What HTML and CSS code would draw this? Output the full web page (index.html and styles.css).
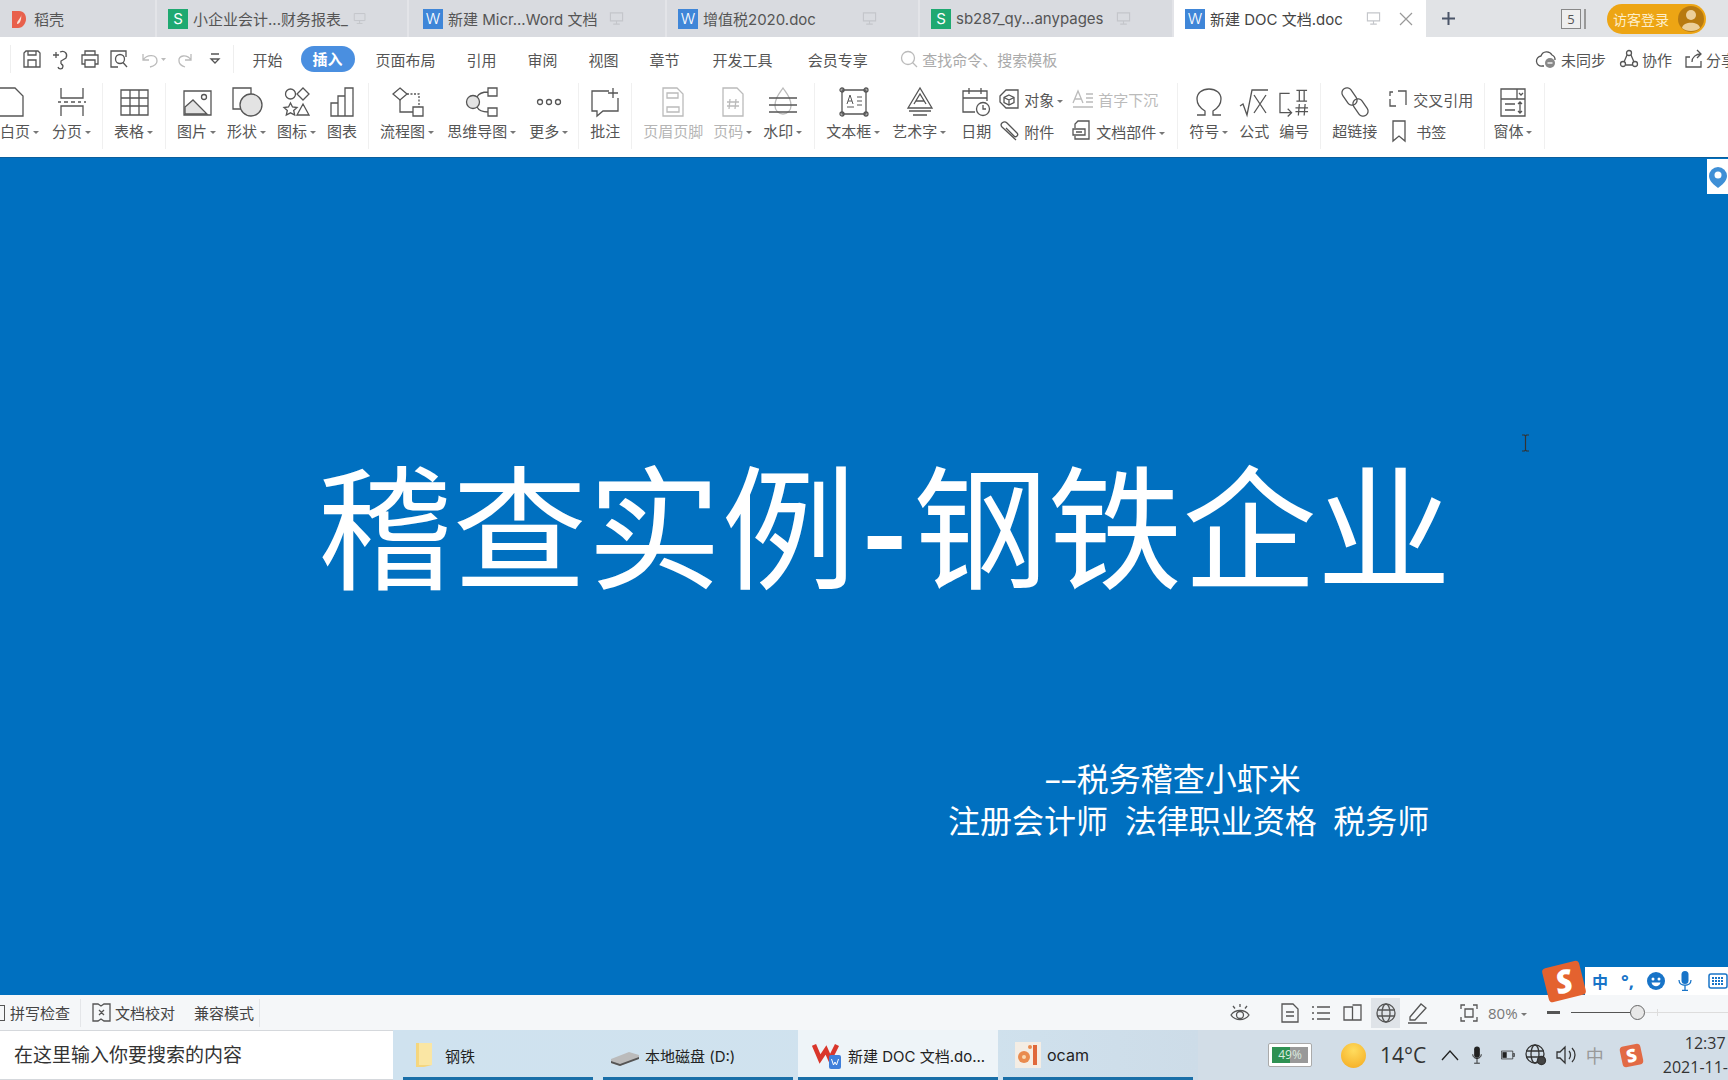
FILE: index.html
```html
<!DOCTYPE html>
<html lang="zh-CN">
<head>
    <meta charset="UTF-8">
    <title>新建 DOC 文档.doc</title>
    <link rel="stylesheet" href="styles.css">
</head>
<body>
    <svg class="defs" width="0" height="0">
        <symbol id="cast" viewBox="0 0 16 16"><path d="M1.5 2h13v8.5h-13zM8 10.5V14M4.5 14h7" fill="none" stroke="currentColor" stroke-width="1.2"/></symbol>
        <symbol id="caret" viewBox="0 0 8 8"><path d="M1 3h6L4 6z" fill="currentColor"/></symbol>
    </svg>

    <!-- tabs -->
    <div class="tabbar">
        <div class="tab tab-first">
            <svg class="tab-logo" width="16" height="20" viewBox="0 0 16 20"><path d="M1 2h7c5 0 7 4 7 8s-3 9-8 9H1z" fill="#e8604c"/><path d="M10 5c1 4-4 6-4 10 3 0 5-5 4-10z" fill="#fbe3d8"/></svg>
            <span>稻壳</span>
        </div>
        <div class="tab"><span class="app-s">S</span><span>小企业会计...财务报表_</span><svg class="cast"><use href="#cast"/></svg></div>
        <div class="tab tab-mic"><span class="app-w">W</span><span>新建 Micr...Word 文档</span><svg class="cast"><use href="#cast"/></svg></div>
        <div class="tab"><span class="app-w">W</span><span>增值税2020.doc</span><svg class="cast"><use href="#cast"/></svg></div>
        <div class="tab"><span class="app-s">S</span><span>sb287_qy...anypages</span><svg class="cast"><use href="#cast"/></svg></div>
        <div class="tab tab-active">
            <span class="app-w">W</span><span>新建 DOC 文档.doc</span>
            <svg class="cast"><use href="#cast"/></svg>
            <svg class="tab-close" width="14" height="14" viewBox="0 0 14 14"><path d="M1 1l12 12M13 1L1 13" stroke="#999" stroke-width="1.2"/></svg>
        </div>
        <div class="tab-tail">
            <svg class="tab-plus" width="15" height="15" viewBox="0 0 15 15"><path d="M7.5 1v13M1 7.5h13" stroke="#4a5568" stroke-width="2"/></svg>
            <div class="tab-count"><span>5</span></div>
            <div class="login">
                <span>访客登录</span>
                <svg width="26" height="26" viewBox="0 0 26 26"><circle cx="13" cy="13" r="13" fill="#b87a10"/><circle cx="13" cy="9" r="5" fill="#eccf9a"/><path d="M4 22c1-7 17-7 18 0-4 4-14 4-18 0z" fill="#eccf9a"/></svg>
            </div>
        </div>
    </div>

    <!-- menu row -->
    <div class="menubar">
        <div class="quick">
            <svg class="ic" width="20" height="20" viewBox="0 0 20 20"><path d="M2 4l2-2h12l2 2v14H2zM6 18v-7h8v7M6 2v4h8V2"/></svg>
            <svg class="ic" width="20" height="20" viewBox="0 0 20 20"><path d="M2 6h6M5 3v6M9 3c5-2 8 2 6 6l-5 3v3M10 15a2.500 2.500 0 1 1-3 3"/></svg>
            <svg class="ic" width="20" height="20" viewBox="0 0 20 20"><path d="M5 6V2h10v4M5 15H2V6h16v9h-3M5 11h10v7H5z"/></svg>
            <svg class="ic" width="20" height="20" viewBox="0 0 20 20"><path d="M17 8V2H2v16h7"/><circle cx="11" cy="10" r="4.500"/><path d="M14 13.500l4 4.500"/></svg>
            <svg class="ic ic-off undo" width="26" height="20" viewBox="0 0 26 20"><path d="M3 5v6h6M3 11c4-6 14-6 14 1 0 3-3 5-7 6"/><path d="M21 9h5l-2.500 3z" class="solid"/></svg>
            <svg class="ic ic-off redo" width="16" height="20" viewBox="0 0 16 20"><path d="M14 5v6H8M14 11C10 5 1 6 2 12c0 3 3 5 6 6"/></svg>
            <svg class="ic more" width="12" height="20" viewBox="0 0 12 20"><path d="M2 5h8M2 10h8l-4 4z"/></svg>
        </div>
        <nav class="menu">
            <a>开始</a><a class="menu-on">插入</a><a>页面布局</a><a>引用</a><a>审阅</a><a>视图</a><a>章节</a><a>开发工具</a><a>会员专享</a>
        </nav>
        <div class="search">
            <svg class="ic ic-off" width="18" height="18" viewBox="0 0 18 18"><circle cx="8" cy="8" r="6.500"/><path d="M12.500 12.500l4.500 4.500"/></svg>
            <span>查找命令、搜索模板</span>
        </div>
        <div class="menu-right">
            <span class="act">
                <svg class="ic" width="22" height="20" viewBox="0 0 22 20"><path d="M8 17H6a5 5 0 0 1-1-10 6 6 0 0 1 11-1 5 5 0 0 1 3 5"/><circle cx="14" cy="14" r="5" fill="#888" stroke="none"/><path d="M11.500 14h5" stroke="#fff"/></svg>
                未同步
            </span>
            <span class="act">
                <svg class="ic" width="20" height="20" viewBox="0 0 20 20"><circle cx="10" cy="4" r="2.500"/><circle cx="4" cy="15" r="2.500"/><circle cx="16" cy="15" r="2.500"/><path d="M8 6l-3 7M12 6l3 7M7 16h6"/></svg>
                协作
            </span>
            <span class="act">
                <svg class="ic" width="18" height="20" viewBox="0 0 18 20"><path d="M5 8H1v10h15v-6M7 13c0-5 4-8 9-8M12 1l4 4-4 4"/></svg>
                分享
            </span>
        </div>
    </div>

    <!-- ribbon -->
    <div class="ribbon">
        <div class="group g-first">
            <div class="tool tool-left">
                <svg class="ic" width="24" height="30" viewBox="0 0 24 30"><path d="M-2 1h17l8 8v20H-2"/></svg>
                <span class="lab">白页<svg class="car"><use href="#caret"/></svg></span>
            </div>
            <div class="tool">
                <svg class="ic" width="30" height="30" viewBox="0 0 30 30"><path d="M4 1v10h22V1M4 29V19h22v10M1 15h3M7 15h4M14 15h4M21 15h3M27 15h2"/></svg>
                <span class="lab">分页<svg class="car"><use href="#caret"/></svg></span>
            </div>
        </div>
        <div class="group">
            <div class="tool">
                <svg class="ic" width="30" height="30" viewBox="0 0 30 30"><path d="M2 3h27v25H2zM2 11h27M2 19h27M11 3v25M20 3v25"/></svg>
                <span class="lab">表格<svg class="car"><use href="#caret"/></svg></span>
            </div>
        </div>
        <div class="group g-wide">
            <div class="tool">
                <svg class="ic" width="30" height="30" viewBox="0 0 30 30"><path d="M2 4h27v24H2z"/><path d="M3 27v-7l8-7 14 14z" fill="#e3e3e3"/><circle cx="22" cy="10" r="2.500"/></svg>
                <span class="lab">图片<svg class="car"><use href="#caret"/></svg></span>
            </div>
            <div class="tool">
                <svg class="ic" width="32" height="30" viewBox="0 0 32 30"><path d="M10 22H2V1h18v8"/><circle cx="20" cy="18" r="11" fill="#e3e3e3"/></svg>
                <span class="lab">形状<svg class="car"><use href="#caret"/></svg></span>
            </div>
            <div class="tool">
                <svg class="ic" width="26" height="30" viewBox="0 0 26 30"><circle cx="6.500" cy="7" r="5"/><path d="M19 1l6 6-6 6-6-6zM6.500 16l2 4 4.500.5-3.300 3 1 4.500-4.200-2.200L2.300 28l1-4.500L0 20.500l4.500-.5zM19 17l6 11H13z"/></svg>
                <span class="lab">图标<svg class="car"><use href="#caret"/></svg></span>
            </div>
            <div class="tool">
                <svg class="ic" width="24" height="30" viewBox="0 0 24 30"><path d="M1 16h7v13H1zM8 9h7v20H8zM15 1h8v28h-8z"/></svg>
                <span class="lab">图表</span>
            </div>
        </div>
        <div class="group g-mid">
            <div class="tool">
                <svg class="ic" width="32" height="30" viewBox="0 0 32 30"><path d="M8 1l7 6-7 6-7-6z"/><path d="M15 7h12v13" stroke-dasharray="2 1.500"/><path d="M8 13v12h13M21 20h10v9H21z"/></svg>
                <span class="lab">流程图<svg class="car"><use href="#caret"/></svg></span>
            </div>
            <div class="tool">
                <svg class="ic" width="32" height="30" viewBox="0 0 32 30"><circle cx="7" cy="15" r="6.500" fill="#e3e3e3"/><path d="M22 1h9v8h-9zM22 21h9v8h-9zM11 10c2-4 5-5 11-5M11 20c2 4 5 5 11 5"/></svg>
                <span class="lab">思维导图<svg class="car"><use href="#caret"/></svg></span>
            </div>
            <div class="tool">
                <svg class="ic" width="26" height="30" viewBox="0 0 26 30"><circle cx="4" cy="15" r="2.500"/><circle cx="13" cy="15" r="2.500"/><circle cx="22" cy="15" r="2.500"/></svg>
                <span class="lab">更多<svg class="car"><use href="#caret"/></svg></span>
            </div>
        </div>
        <div class="group">
            <div class="tool">
                <svg class="ic" width="30" height="30" viewBox="0 0 30 30"><path d="M19 4H2v20h5v5l6-5h15V11M23 1v10M18 6h10"/></svg>
                <span class="lab">批注</span>
            </div>
        </div>
        <div class="group g-tight">
            <div class="tool tool-off">
                <svg class="ic" width="24" height="30" viewBox="0 0 24 30"><path d="M2 1h14l6 6v22H2zM6 6h11v5H6zM6 20h12v5H6z"/></svg>
                <span class="lab">页眉页脚</span>
            </div>
            <div class="tool tool-off">
                <svg class="ic" width="24" height="30" viewBox="0 0 24 30"><path d="M2 1h14l6 6v22H2zM9 12l-1 10M15 12l-1 10M6 15h12M6 19h12"/></svg>
                <span class="lab">页码<svg class="car"><use href="#caret"/></svg></span>
            </div>
            <div class="tool">
                <svg class="ic" width="30" height="30" viewBox="0 0 30 30"><path d="M15 1C11 7 7 11 7 19a8 8 0 0 0 16 0c0-8-4-12-8-18z" stroke="#bbb"/><path d="M1 11h28M1 18h28M1 25h28"/></svg>
                <span class="lab">水印<svg class="car"><use href="#caret"/></svg></span>
            </div>
        </div>
        <div class="group">
            <div class="tool">
                <svg class="ic" width="30" height="30" viewBox="0 0 30 30"><path d="M3 3h24v24H3z"/><path d="M8 17l3-9 3 9M9 14h4M8 20h7M18 10h5M18 14h5M18 18h5" stroke-width="1"/><circle cx="3" cy="3" r="2"/><circle cx="27" cy="3" r="2"/><circle cx="3" cy="27" r="2"/><circle cx="27" cy="27" r="2"/></svg>
                <span class="lab">文本框<svg class="car"><use href="#caret"/></svg></span>
            </div>
            <div class="tool">
                <svg class="ic" width="28" height="30" viewBox="0 0 28 30"><path d="M2 21L14 1l12 20zM8 17l6-10 6 10M10 14h8M3 24h22M7 28h14"/></svg>
                <span class="lab">艺术字<svg class="car"><use href="#caret"/></svg></span>
            </div>
            <div class="tool tool-date">
                <svg class="ic" width="28" height="30" viewBox="0 0 28 30"><path d="M13 25H1V4h24v10M1 11h24M7 1v6M19 1v6"/><circle cx="21" cy="22" r="6.500"/><path d="M21 18v4h3"/></svg>
                <span class="lab">日期</span>
            </div>
            <div class="col">
                <div class="mini">
                    <svg class="ic" width="20" height="22" viewBox="0 0 20 22"><path d="M1 8l6-6h12v18H7l-6-6z"/><path d="M10 7l5 2.500v5L10 17l-5-2.500v-5zM5 9.500l5 2.500 5-2.500M10 12v5"/></svg>
                    <span>对象<svg class="car"><use href="#caret"/></svg></span>
                </div>
                <div class="mini">
                    <svg class="ic" width="20" height="22" viewBox="0 0 20 22"><path d="M17 20L3 7c-3-3 2-7 5-4l10 10c2 2-1 5-3 3L7 8"/></svg>
                    <span>附件</span>
                </div>
            </div>
            <div class="col col-tight">
                <div class="mini mini-off">
                    <svg class="ic" width="22" height="22" viewBox="0 0 22 22"><path d="M1 15L6 3l5 12M3 11h6M1 19h20M14 6h7M14 10h7M14 14h7"/></svg>
                    <span>首字下沉</span>
                </div>
                <div class="mini">
                    <svg class="ic" width="20" height="22" viewBox="0 0 20 22"><path d="M3 8V4l3-3h11v18H3v-3M1 9h12v6H1zM4 12h6"/></svg>
                    <span>文档部件<svg class="car"><use href="#caret"/></svg></span>
                </div>
            </div>
        </div>
        <div class="group g-sym">
            <div class="tool">
                <svg class="ic" width="28" height="30" viewBox="0 0 28 30"><path d="M2 28h8v-4C5 21 2 17 2 12 2 6 7 2 14 2s12 4 12 10c0 5-3 9-8 12v4h8"/></svg>
                <span class="lab">符号<svg class="car"><use href="#caret"/></svg></span>
            </div>
            <div class="tool">
                <svg class="ic" width="30" height="30" viewBox="0 0 30 30"><path d="M1 19l3-2 4 11 5-25h16M15 8l12 18M27 8L15 26"/></svg>
                <span class="lab">公式</span>
            </div>
            <div class="tool">
                <svg class="ic" width="30" height="30" viewBox="0 0 31 30"><path d="M11 6H1v20h12M9 22l4 4-4 4M18 3h11M18 14h11M21 3v11M26 3v11M21 17l-1 12M27 17l-1 12M17 21h13M17 25h13"/></svg>
                <span class="lab">编号</span>
            </div>
        </div>
        <div class="group">
            <div class="tool">
                <svg class="ic" width="30" height="30" viewBox="0 0 30 30"><rect x="4.500" y="0" width="10" height="19" rx="5" transform="rotate(-35 9.500 9.500)"/><rect x="15.500" y="11" width="10" height="19" rx="5" transform="rotate(-35 20.500 20.500)"/></svg>
                <span class="lab">超链接</span>
            </div>
            <div class="col">
                <div class="mini">
                    <svg class="ic" width="20" height="22" viewBox="0 0 20 22"><path d="M2 8V4h3M10 3h8v14M8 18H2v-7"/></svg>
                    <span>交叉引用</span>
                </div>
                <div class="mini">
                    <svg class="ic bookmark" width="16" height="22" viewBox="0 0 16 22"><path d="M2 1h12v20l-6-5-6 5z"/></svg>
                    <span>书签</span>
                </div>
            </div>
        </div>
        <div class="group g-last">
            <div class="tool">
                <svg class="ic" width="28" height="30" viewBox="0 0 28 30"><path d="M2 2h24v27H2zM2 12h24M18 2v10M20 6l2 2 2-2M6 17h10M6 23h10M21 15v11M19 17l2-2 2 2M19 24l2 2 2-2"/></svg>
                <span class="lab">窗体<svg class="car"><use href="#caret"/></svg></span>
            </div>
        </div>
    </div>

    <!-- slide -->
    <main class="slide">
        <h1 class="slide-title">稽查实例<span class="slide-dash">-</span>钢铁企业</h1>
        <div class="slide-sub">
            <p class="sub-first">––税务稽查小虾米</p>
            <p>注册会计师&nbsp;&nbsp;法律职业资格&nbsp;&nbsp;税务师</p>
        </div>

        <div class="side-tab">
            <svg width="21" height="24" viewBox="0 0 21 24"><path d="M11 2a9 9 0 0 1 9 9c0 5-5 9-9 12-4-3-9-7-9-12a9 9 0 0 1 9-9z" fill="#3f8fd6"/><circle cx="11" cy="10" r="3.500" fill="#fff"/></svg>
        </div>
        <svg class="ibeam" width="9" height="18" viewBox="0 0 9 18"><path d="M1 1h2.500L4.500 2l1-1H8M4.500 2v14M1 17h2.500l1-1 1 1H8" fill="none" stroke="#333" stroke-width="1.200"/></svg>

        <div class="ime">
            <div class="ime-logo">S</div>
            <span class="ime-zh">中</span>
            <span class="ime-punc">°,</span>
            <svg width="18" height="18" viewBox="0 0 18 18"><circle cx="9" cy="9" r="9" fill="#1874c8"/><circle cx="6" cy="7" r="1.500" fill="#fff"/><circle cx="12" cy="7" r="1.500" fill="#fff"/><path d="M4.500 10.500h9c-1 5-8 5-9 0z" fill="#fff"/></svg>
            <svg width="14" height="20" viewBox="0 0 14 20"><rect x="3.500" y="0" width="7" height="13" rx="3.500" fill="#1874c8"/><path d="M1 9c0 7 12 7 12 0M7 15v4M4 19.500h6" fill="none" stroke="#1874c8" stroke-width="1.300"/></svg>
            <svg class="ime-kb" width="20" height="16" viewBox="0 0 20 16"><rect x="1" y="1" width="18" height="14" rx="2" fill="none" stroke="#1874c8" stroke-width="1.500"/><path d="M4 5h12M4 8h12M4 11h12" stroke="#1874c8" stroke-width="1.800" stroke-dasharray="2 1"/></svg>
        </div>
    </main>

    <!-- status bar -->
    <div class="statusbar">
        <div class="st-left">
            <span class="st-item st-spell"><i class="st-box"></i>拼写检查</span>
            <span class="st-item st-check">
                <svg class="ic" width="19" height="20" viewBox="0 0 19 20"><path d="M1 1h5l3 2 3-2h6v17h-6l-3-2-3 2H1zM7 7l5 5M12 7l-5 5"/></svg>
                文档校对
            </span>
            <span class="st-item st-mode">兼容模式</span>
        </div>
        <div class="st-right">
            <svg class="ic st-eye" width="20" height="20" viewBox="0 0 20 20"><path d="M1 12c4-6 14-6 18 0-4 6-14 6-18 0zM10 1v3M3 3l2 2.500M17 3l-2 2.500"/><circle cx="10" cy="12" r="3.500"/></svg>
            <svg class="ic" width="18" height="20" viewBox="0 0 18 20"><path d="M1 1h11l5 5v13H1zM5 9h8M5 13h8"/></svg>
            <svg class="ic" width="18" height="20" viewBox="0 0 18 20"><path d="M5 4h13M5 10h13M5 16h13M0 4h2M0 10h2M0 16h2"/></svg>
            <svg class="ic" width="19" height="20" viewBox="0 0 19 20"><path d="M9.500 4H1v13h8.500V4zM9.500 17H18V2H9.500"/></svg>
            <span class="st-web">
                <svg class="ic" width="20" height="20" viewBox="0 0 20 20"><circle cx="10" cy="10" r="9"/><ellipse cx="10" cy="10" rx="4" ry="9"/><path d="M1 7h18M1 13h18"/></svg>
            </span>
            <svg class="ic st-pen" width="21" height="22" viewBox="0 0 21 22"><path d="M3 15L14 2l5 4L8 18H3zM1 21h19"/></svg>
            <svg class="ic st-fit" width="18" height="20" viewBox="0 0 18 20"><path d="M1 6V2h4M13 2h4v4M1 14v4h4M13 18h4v-4M5 6h8v8H5z"/></svg>
            <span class="st-zoom">80%<svg class="car"><use href="#caret"/></svg></span>
            <i class="st-minus"></i>
            <div class="st-slider"><i class="knob"></i><i class="tick"></i></div>
        </div>
    </div>

    <!-- taskbar -->
    <div class="taskbar">
        <div class="task-search">在这里输入你要搜索的内容</div>
        <div class="tasks">
            <div class="task">
                <svg class="task-folder" width="16" height="26" viewBox="0 0 16 26"><path d="M0 1h16v22l-8 2H0z" fill="#f5d67e"/><path d="M3 1h13v22H3z" fill="#fae6a4"/></svg>
                <span>钢铁</span>
            </div>
            <div class="task">
                <svg class="task-disk" width="28" height="16" viewBox="0 0 28 16"><path d="M0 8l18-7 10 3v3L9 15 0 12z" fill="#bbb"/><path d="M0 10l9 3 19-7v2L9 15l-9-3z" fill="#555"/></svg>
                <span>本地磁盘 (D:)</span>
            </div>
            <div class="task task-active">
                <svg class="task-wps" width="30" height="28" viewBox="0 0 30 28"><path d="M2 4l6 14 6-9 4 9 7-14" fill="none" stroke="#d9362b" stroke-width="4.500"/><rect x="17" y="14" width="12" height="14" rx="2" fill="#3f7fdb"/><path d="M19.500 18l2 6 1.500-3 1.500 3 2-6" fill="none" stroke="#fff"/></svg>
                <span>新建 DOC 文档.do...</span>
            </div>
            <div class="task">
                <svg class="task-cam" width="26" height="26" viewBox="0 0 26 26"><rect width="26" height="26" fill="#f4ede4"/><circle cx="9" cy="15" r="6" fill="#e98b4e"/><circle cx="9" cy="15" r="2" fill="#f9d9b0"/><circle cx="15" cy="5" r="2" fill="#e98b4e"/><rect x="18" y="3" width="4" height="20" fill="#e0683a"/></svg>
                <span class="task-ocam">ocam</span>
            </div>
        </div>
        <div class="tray">
            <div class="bat"><div class="bat-in"><span class="bat-fill"></span><span class="bat-txt">49%</span></div></div>
            <i class="sun"></i>
            <span class="temp">14°C</span>
            <svg class="ic tray-up" width="18" height="12" viewBox="0 0 18 12"><path d="M1 11l8-9 8 9"/></svg>
            <svg width="14" height="24" viewBox="0 0 14 24"><rect x="3" y="0" width="8" height="16" rx="4" fill="#222"/><path d="M1 11c0 8 12 8 12 0M7 17v6M3 23.500h8" fill="none" stroke="#222" stroke-width="1.300"/></svg>
            <svg class="tray-batt" width="19" height="12" viewBox="0 0 19 12"><path d="M.5.500h16v11H.5zM17 4h2v4h-2z" fill="none" stroke="#222"/><rect x="2" y="2" width="6" height="8" fill="#222"/></svg>
            <svg class="ic ic-dark" width="22" height="22" viewBox="0 0 22 22"><circle cx="10" cy="10" r="9"/><ellipse cx="10" cy="10" rx="4" ry="9"/><path d="M1 7h18M1 13h18"/><circle cx="16.500" cy="16.500" r="4" fill="#444"/></svg>
            <svg class="ic ic-dark" width="21" height="20" viewBox="0 0 21 20"><path d="M1 7h3l5-5v16l-5-5H1zM13 6c2 2 2 6 0 8M16 3c4 4 4 10 0 14"/></svg>
            <span class="tray-zh">中</span>
            <div class="tray-s">S</div>
            <div class="clock"><span class="clock-time">12:37</span><span>2021-11-</span></div>
        </div>
    </div>
</body>
</html>
```

FILE: styles.css
```css
* {
    box-sizing: border-box;
}

html, body {
    margin: 0;
    width: 1728px;
    height: 1080px;
    overflow: hidden;
}

body {
    display: flex;
    flex-direction: column;
    font-family: "Open Sans", "Noto Sans CJK SC", sans-serif;
    font-size: 15px;
    color: #555;
    background: #fff;
}

.defs {
    position: absolute;
}

.ic {
    flex-shrink: 0;
    fill: none;
    stroke: #555;
    stroke-width: 1.3;
    overflow: visible;
}

.ic-off {
    stroke: #bbb;
}

.ic-dark {
    stroke: #333;
}

.solid {
    fill: #bbb;
    stroke: none;
}

.car {
    width: 8px;
    height: 8px;
    margin-left: 2px;
    color: #777;
    vertical-align: 1px;
}

/* tabs */
.tabbar {
    height: 37px;
    flex-shrink: 0;
    display: grid;
    grid-template-columns: 157px 252px 258px 253px 254px 252px 1fr;
    background: #e1e3e6;
}

.tab {
    display: flex;
    align-items: center;
    gap: 5px;
    padding: 0 41px 0 11px;
    background: #d9dbe0;
    border-right: 2px solid #e3e4e8;
    font-family: "Inter", "Noto Sans CJK SC", sans-serif;
    white-space: nowrap;
}

.tab-first {
    gap: 7px;
}

.tab-mic {
    padding-left: 14px;
}

.tab-active {
    background: #fff;
    border-right: 0;
    padding-right: 13px;
    color: #444;
}

.tab-logo {
    flex-shrink: 0;
}

.app-s, .app-w {
    width: 20px;
    height: 20px;
    flex-shrink: 0;
    display: flex;
    align-items: center;
    justify-content: center;
    color: #fff;
    font-size: 15px;
    line-height: 1;
}

.app-s {
    background: #1fa971;
}

.app-w {
    background: #3f86d8;
    font-weight: 300;
}

.cast {
    width: 15px;
    height: 15px;
    margin-left: auto;
    color: #c4c6ca;
}

.tab-close {
    margin-left: 13px;
}

.tab-tail {
    display: flex;
    align-items: center;
    padding-left: 15px;
}

.tab-plus {
    margin-right: 105px;
}

.tab-count {
    width: 25px;
    height: 20px;
    border-right: 2px solid #999;
    padding-right: 3px;
    margin-right: 21px;
}

.tab-count span {
    display: block;
    width: 20px;
    height: 20px;
    background: #eee;
    border: 1px solid #888;
    font-size: 13px;
    line-height: 18px;
    text-align: center;
}

.login {
    width: 99px;
    height: 30px;
    display: flex;
    align-items: center;
    justify-content: space-between;
    padding: 0 2px 0 6px;
    border-radius: 15px;
    background: #eda514;
    color: #fdeecb;
    font-size: 14px;
}

/* menu row */
.menubar {
    height: 46px;
    flex-shrink: 0;
    display: flex;
    align-items: center;
    padding-bottom: 2px;
    white-space: nowrap;
}

.quick {
    width: 224px;
    height: 28px;
    flex-shrink: 0;
    margin-left: 10px;
    display: flex;
    align-items: center;
    gap: 9px;
    padding-left: 11px;
    border-left: 1px solid #eee;
    border-right: 1px solid #eee;
}

.undo {
    margin-left: 2px;
}

.redo {
    margin-left: 2px;
}

.more {
    margin-left: 7px;
}

.menu {
    display: flex;
    align-items: center;
    padding-left: 3px;
}

.menu a {
    padding: 0 15.5px;
}

.menu a.menu-on {
    height: 26px;
    margin: 0 5.500px 0 2.500px;
    padding: 0 12px;
    border-radius: 13px;
    background: #4a8fe0;
    color: #fff;
    font-weight: 700;
    line-height: 26px;
}

.menu a:nth-child(8) {
    margin-left: 2px;
}

.menu a:nth-child(9) {
    margin-left: 4px;
}

.search {
    display: flex;
    align-items: center;
    gap: 4px;
    margin-left: 17px;
    color: #aaa;
}

.menu-right {
    margin-left: auto;
    display: flex;
    gap: 13px;
    margin-right: -8px;
}

.act {
    display: flex;
    align-items: center;
    gap: 3px;
    font-size: 15px;
}

/* ribbon */
.ribbon {
    height: 74px;
    flex-shrink: 0;
    display: flex;
    align-items: flex-start;
    white-space: nowrap;
    font-size: 15px;
}

.group {
    height: 66px;
    display: flex;
    gap: 11px;
    padding: 0 11px;
    border-right: 1px solid #f0f0f0;
}

.g-first {
    gap: 12px;
    margin-left: -3px;
    padding: 0 10px 0 0;
}

.g-wide {
    gap: 10px;
}

.g-mid {
    gap: 12px;
    padding-right: 9px;
}

.g-tight {
    gap: 10px;
}

.g-sym {
    gap: 10px;
}

.g-last {
    padding-left: 8px;
}

.tool {
    display: flex;
    flex-direction: column;
    align-items: center;
    gap: 2px;
    padding-top: 4px;
}

.tool-left {
    align-items: flex-start;
}

.tool-left .ic {
    margin-left: 3px;
}

.tool-left .lab {
    margin-left: 3px;
}

.tool-date {
    margin: 0 -3px 0 3px;
}

.lab {
    line-height: 24px;
}

.tool-off {
    color: #b5b5b5;
}

.tool-off .ic {
    stroke: #bbb;
}

.col {
    display: flex;
    flex-direction: column;
    gap: 8px;
    padding-top: 4px;
}

.col-tight {
    margin-left: -3px;
}

.col-tight .mini {
    gap: 4px;
}

.mini {
    height: 24px;
    display: flex;
    align-items: center;
    gap: 5px;
}

.mini-off {
    color: #bbb;
}

.mini-off .ic {
    stroke: #bbb;
}

.bookmark {
    margin: 0 4px 0 3px;
}

/* slide */
.slide {
    position: relative;
    flex: 1;
    display: flex;
    flex-direction: column;
    padding-top: 294px;
    background: #0070c0;
    border-top: 1px solid #0a5f9e;
    color: #fff;
}

.slide-title {
    margin: 0 0 0 318px;
    font-size: 134.500px;
    font-weight: 400;
    line-height: 150px;
    white-space: nowrap;
}

.slide-dash {
    margin: 0 7px;
    font-weight: 600;
}

.slide-sub {
    align-self: flex-start;
    margin: 156px 0 0 948px;
    font-size: 32px;
    line-height: 42px;
    text-align: center;
    white-space: nowrap;
}

.slide-sub p {
    margin: 0;
}

.sub-first {
    padding-right: 32px;
}

.side-tab {
    position: absolute;
    top: 1px;
    right: 0;
    width: 21px;
    height: 35px;
    display: flex;
    align-items: center;
    background: #fff;
}

.ibeam {
    position: absolute;
    left: 1521px;
    top: 276px;
}

.ime {
    position: absolute;
    right: 0;
    bottom: 0;
    width: 143px;
    height: 28px;
    display: flex;
    align-items: center;
    gap: 13px;
    padding-left: 7px;
    background: #fff;
    color: #1874c8;
}

.ime-logo {
    position: absolute;
    left: -40px;
    top: -3px;
    width: 38px;
    height: 35px;
    background: #e4622f;
    border-radius: 4px;
    transform: rotate(-14deg);
    color: #fff;
    font-size: 32px;
    font-weight: 800;
    font-style: italic;
    line-height: 33px;
    text-align: center;
}

.ime-zh {
    font-size: 16px;
    font-weight: 700;
}

.ime-punc {
    font-size: 18px;
    font-weight: 700;
    line-height: 1;
}

.ime-kb {
    flex-shrink: 0;
    margin-left: 3px;
}

/* status bar */
.statusbar {
    height: 35px;
    flex-shrink: 0;
    display: flex;
    align-items: center;
    justify-content: space-between;
    background: #f5f7f9;
    white-space: nowrap;
    color: #444;
}

.st-left {
    display: flex;
    align-items: center;
    height: 100%;
}

.st-item {
    height: 28px;
    display: flex;
    align-items: center;
}

.st-box {
    width: 5px;
    height: 16px;
    margin-right: 5px;
    border: 1px solid #555;
    border-left: 0;
}

.st-spell {
    padding-right: 10px;
    border-right: 1px solid #e4e6e9;
}

.st-check {
    gap: 4px;
    padding-left: 11px;
}

.st-mode {
    margin-left: 19px;
    padding-right: 5px;
    border-right: 1px solid #e4e6e9;
}

.st-right {
    display: flex;
    align-items: center;
    gap: 13px;
    width: 498px;
    height: 100%;
}

.st-eye {
    margin-right: 18px;
}

.st-web {
    width: 29px;
    height: 30px;
    margin: 0 -6px 0 -4px;
    display: flex;
    align-items: center;
    justify-content: center;
    background: #dfe3e8;
}

.st-pen {
    margin-left: 0;
}

.st-fit {
    margin-left: 19px;
}

.st-zoom {
    margin-left: -3px;
    color: #777;
}

.st-minus {
    width: 13px;
    height: 2.500px;
    margin-left: 6px;
    background: #555;
}

.st-slider {
    position: relative;
    flex: 1;
    height: 1px;
    background: #ddd;
    margin-left: -2px;
}

.st-slider::before {
    content: "";
    position: absolute;
    left: 0;
    top: 0;
    width: 60px;
    height: 1px;
    background: #555;
}

.knob {
    position: absolute;
    left: 59px;
    top: -7px;
    width: 15px;
    height: 15px;
    border-radius: 50%;
    background: #e8e8e8;
    border: 1px solid #666;
}

.tick {
    position: absolute;
    left: 86px;
    top: -3px;
    width: 1px;
    height: 7px;
    background: #ddd;
}

/* taskbar */
.taskbar {
    height: 50px;
    flex-shrink: 0;
    display: flex;
    background: #d2dde7;
    white-space: nowrap;
    color: #222;
}

.task-search {
    width: 393px;
    padding-left: 14px;
    background: #fff;
    border-top: 1px solid #d5d8dc;
    border-bottom: 1px solid #d5d8dc;
    font-size: 19px;
    line-height: 48px;
    color: #333;
}

.tasks {
    display: flex;
    padding-left: 5px;
    background: linear-gradient(90deg, #cfe2ef, #d0e2ee 70%, #cddce8);
}

.task {
    width: 200px;
    display: flex;
    align-items: center;
    gap: 6px;
    padding: 0 10px;
    position: relative;
    font-family: "Inter", "Noto Sans CJK SC", sans-serif;
}

.task::after {
    content: "";
    position: absolute;
    left: 5px;
    right: 5px;
    bottom: 0;
    height: 3px;
    background: #1a6fa8;
}

.task-active {
    background: #eef4f8;
}

.task-active::after {
    left: 0;
    right: 0;
}

.task-folder {
    margin: 0 7px 0 8px;
}

.task-disk {
    margin: 8px 0 0 3px;
}

.task-wps {
    margin-left: 4px;
}

.task-cam {
    margin-left: 7px;
}

.task-ocam {
    font-size: 16px;
}

.tray {
    display: flex;
    align-items: center;
    flex: 1;
    padding-left: 70px;
    overflow: hidden;
}

.bat {
    width: 44px;
    height: 24px;
    flex-shrink: 0;
    padding: 3px;
    background: #fff;
    border: 1px solid #aaa;
    border-radius: 2px;
}

.bat-in {
    position: relative;
    height: 100%;
    background: #999;
}

.bat-fill {
    position: absolute;
    left: 0;
    top: 0;
    bottom: 0;
    width: 49%;
    background: #2e9153;
}

.bat-txt {
    position: relative;
    display: block;
    color: #d9eadf;
    font-size: 12px;
    line-height: 16px;
    text-align: center;
}

.sun {
    width: 25px;
    height: 25px;
    flex-shrink: 0;
    margin: 0 14px 0 29px;
    border-radius: 50%;
    background: radial-gradient(circle at 50% 30%, #ffdc5e, #f4a91f);
}

.temp {
    font-size: 21px;
    margin-right: 15px;
    color: #333;
}

.tray-up {
    margin-right: 13px;
    stroke: #222;
}

.tray-batt {
    margin: 0 10px 0 19px;
}

.tray .ic-dark + .ic-dark {
    margin-left: 9px;
}

.tray-zh {
    margin-left: 9px;
    color: #999;
    font-size: 18px;
}

.tray-s {
    width: 21px;
    height: 21px;
    flex-shrink: 0;
    margin-left: 17px;
    background: #e26a45;
    border-radius: 4px;
    transform: rotate(-12deg);
    color: #fff;
    font-size: 18px;
    font-weight: 800;
    line-height: 20px;
    text-align: center;
}

.clock {
    flex-shrink: 0;
    display: flex;
    flex-direction: column;
    margin-left: 21px;
    font-size: 16px;
    line-height: 24px;
    color: #333;
}

.clock-time {
    padding-left: 22px;
}
```
